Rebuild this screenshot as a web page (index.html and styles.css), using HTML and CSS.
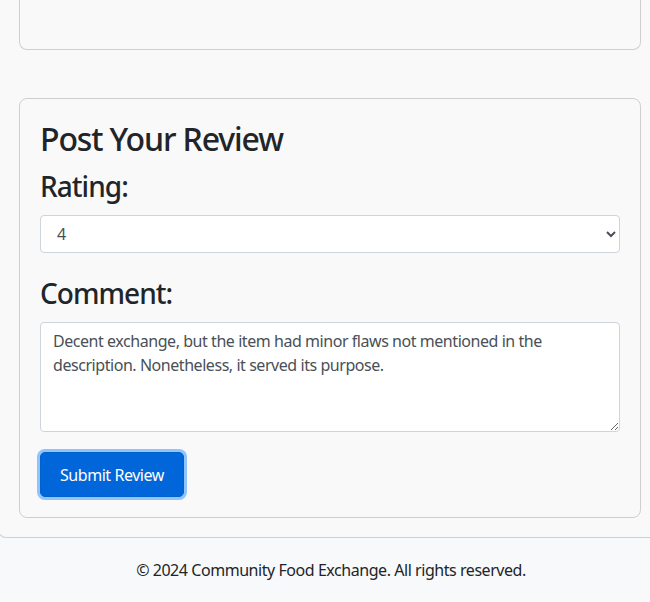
FILE: index.html
```html
<!DOCTYPE html>
<html lang="en">
<head>
<meta charset="utf-8">
<title>Post Your Review</title>
<link rel="stylesheet" href="styles.css">
</head>
<body>
<main class="page">
  <section class="card card-partial"></section>
  <section class="card review-card">
    <h2 class="card-title">Post Your Review</h2>
    <form class="review-form">
      <div class="form-group">
        <label class="form-label" for="rating">Rating:</label>
        <select id="rating" class="form-control">
          <option>1</option>
          <option>2</option>
          <option>3</option>
          <option selected>4</option>
          <option>5</option>
        </select>
      </div>
      <div class="form-group">
        <label class="form-label" for="comment">Comment:</label>
        <textarea id="comment" class="form-control" rows="4">Decent exchange, but the item had minor flaws not mentioned in the description. Nonetheless, it served its purpose.</textarea>
      </div>
      <button type="button" class="btn btn-primary">Submit Review</button>
    </form>
  </section>
</main>
<footer class="site-footer">
  <p>&copy; 2024 Community Food Exchange. All rights reserved.</p>
</footer>
</body>
</html>
```
FILE: styles.css
```css
html, body {
  margin: 0;
  padding: 0;
  overflow: hidden;
}
body {
  font-family: "Segoe UI", "Noto Sans", "Open Sans", sans-serif;
  font-size: 16px;
  line-height: 1.5;
  letter-spacing: -0.028em;
  color: #212529;
  background: #f8f9fa;
}
.page {
  margin: 0 -12px 0 -2px;
  padding: 0 20px 19px 20px;
  background: #f9f9f9;
  border: 1px solid #cfcfcf;
  border-top: 0;
  border-radius: 0 0 8px 8px;
}
.card {
  background: #f9f9f9;
  border: 1px solid #cfcfcf;
  border-radius: 8px;
}
.card-partial {
  height: 49px;
  border-top: 0;
  border-radius: 0 0 8px 8px;
  margin-bottom: 48px;
}
.review-card {
  padding: 20px;
}
.card-title {
  margin: 0 0 8px 0;
  padding-top: 2px;
  font-size: 32px;
  font-weight: 500;
  line-height: 36.4px;
  letter-spacing: -0.035em;
}
.review-form {
  margin: 0;
}
.form-group {
  margin-bottom: 20px;
}
.form-group + .form-group {
  margin-top: -1px;
}
.form-label {
  display: block;
  font-size: 28px;
  font-weight: 500;
  line-height: 42px;
  letter-spacing: -0.034em;
  margin-bottom: 8px;
}
.form-control {
  display: block;
  width: 100%;
  box-sizing: border-box;
  padding: 6px 12px;
  font-family: inherit;
  font-size: 16px;
  line-height: 24px;
  letter-spacing: -0.028em;
  color: #495057;
  background: #fff;
  border: 1px solid #ced4da;
  border-radius: 4px;
}
select.form-control {
  height: 38px;
}
textarea.form-control {
  resize: vertical;
}
.btn {
  display: inline-block;
  font-family: inherit;
  font-size: 16px;
  line-height: 24px;
  letter-spacing: -0.028em;
  padding: 10px 19px 9px;
  border: 1px solid transparent;
  border-radius: 5px;
  cursor: pointer;
}
.btn-primary {
  color: #fff;
  background: #0066d9;
  border-color: #0062cc;
  box-shadow: 0 0 0 3px rgba(38, 143, 255, 0.5);
}
.site-footer {
  margin-right: -12px;
  text-align: center;
  padding: 20px 0;
  background: #f8f9fa;
}
.site-footer p {
  margin: 0;
}
```
